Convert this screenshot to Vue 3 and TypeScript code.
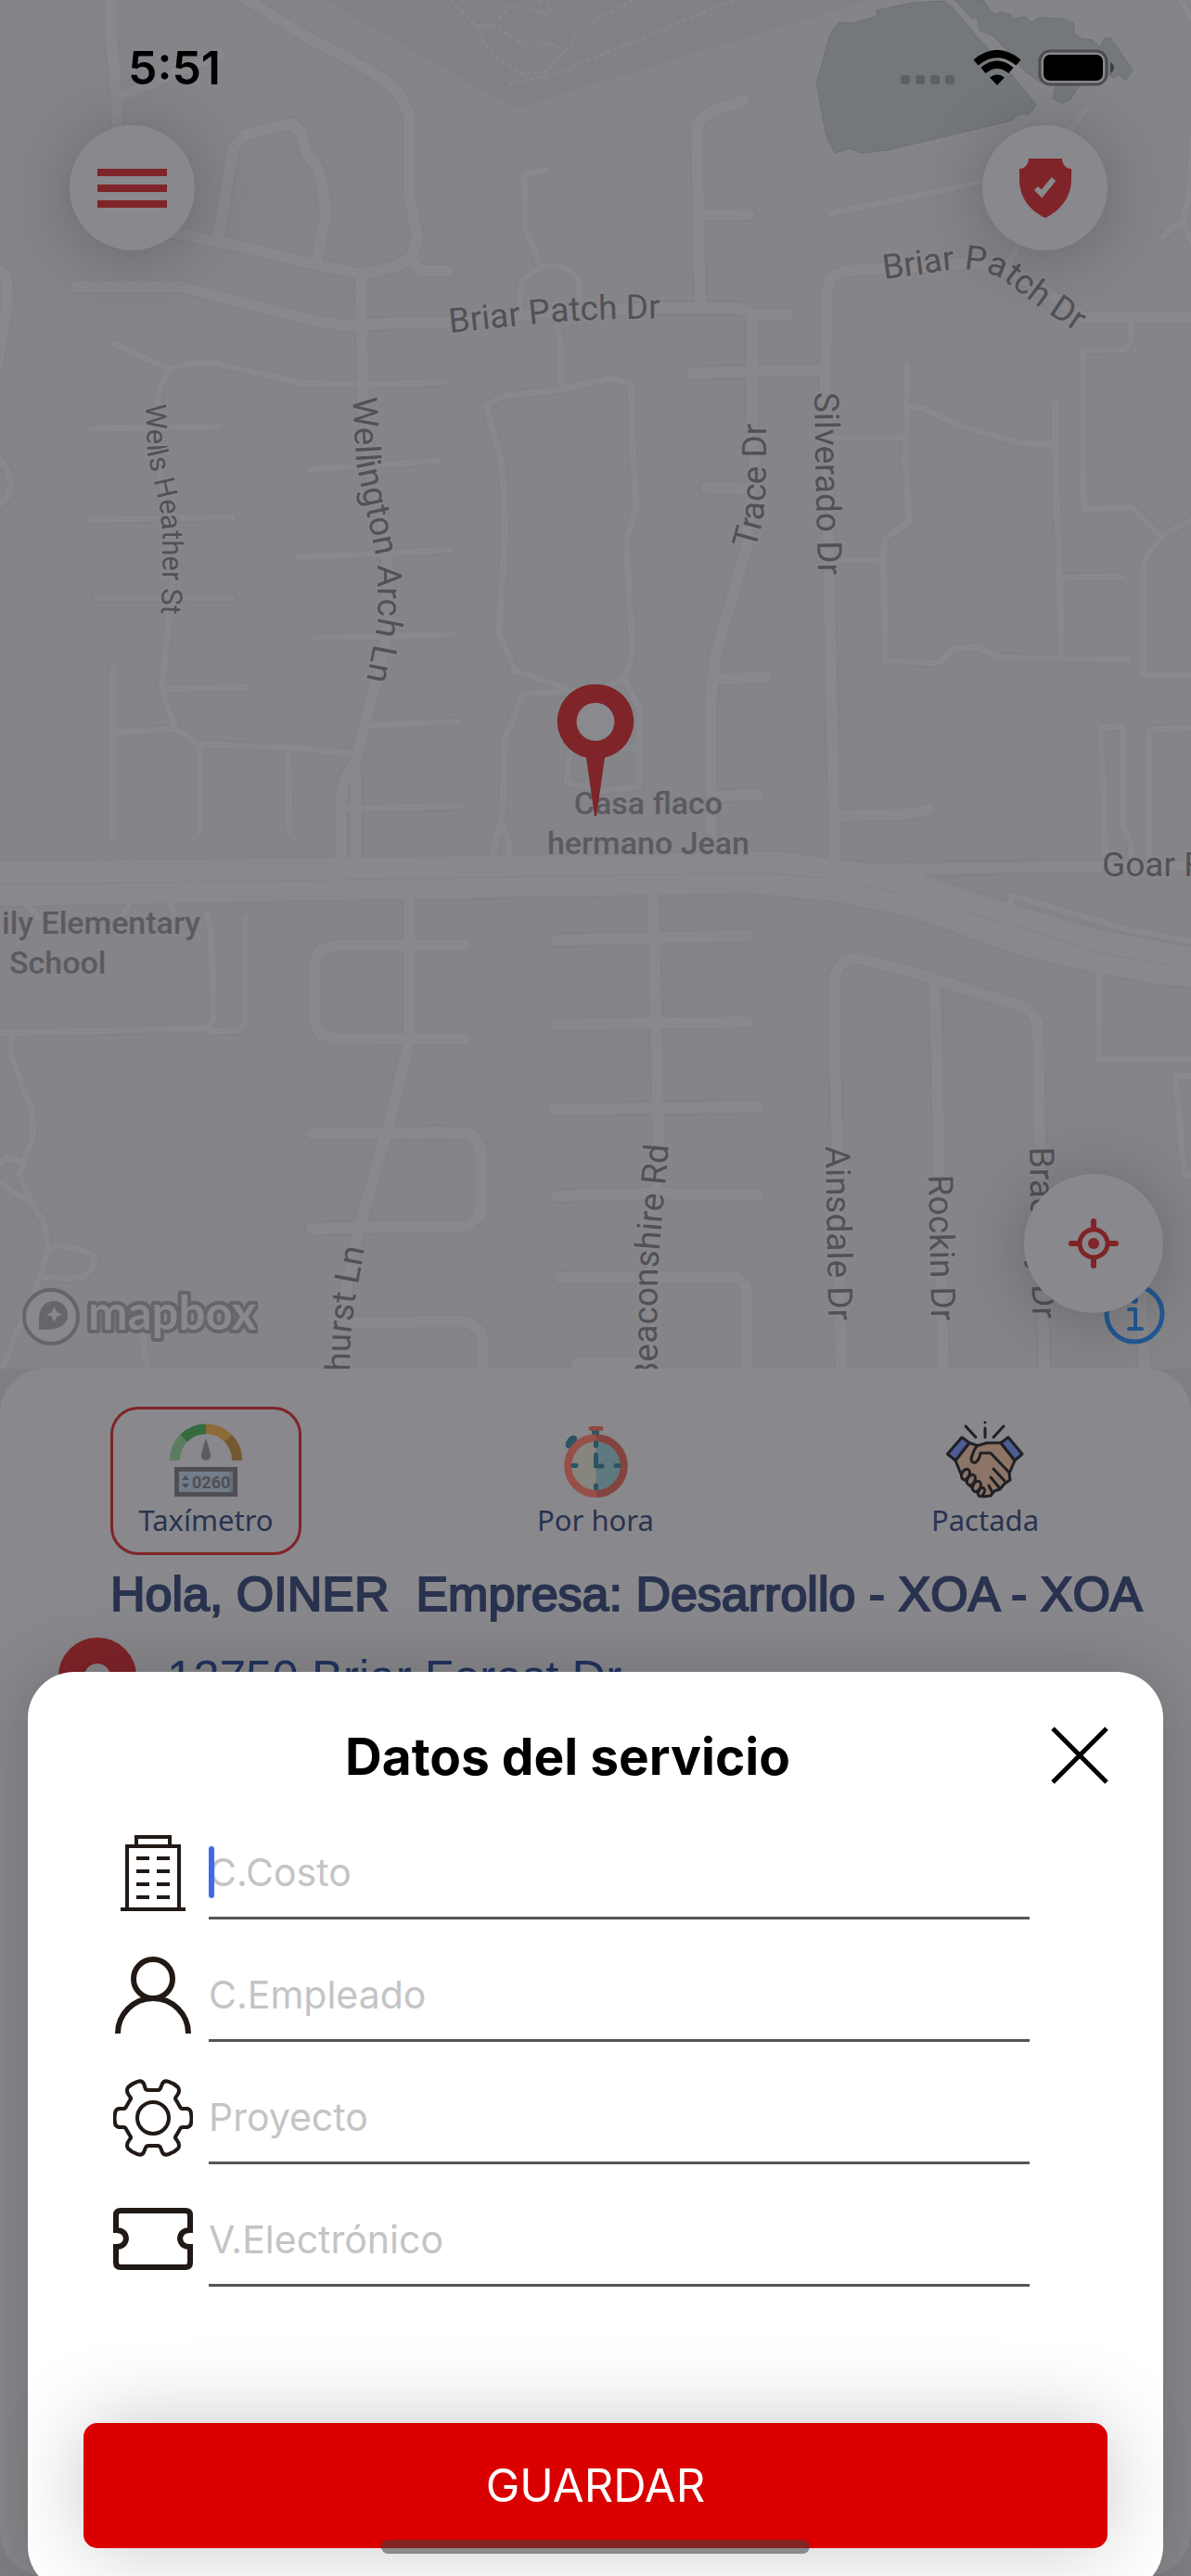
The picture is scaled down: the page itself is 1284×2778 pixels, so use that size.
<script setup lang="ts">
import { ref } from 'vue'

type FieldIcon = 'building' | 'person' | 'gear' | 'ticket'
interface Field { id: string; icon: FieldIcon; label: string }
interface StreetLabel { id: string; text: string; path: string; end?: boolean; small?: boolean }

const fields: Field[] = [
  { id: 'costo', icon: 'building', label: 'C.Costo' },
  { id: 'empleado', icon: 'person', label: 'C.Empleado' },
  { id: 'proyecto', icon: 'gear', label: 'Proyecto' },
  { id: 'vale', icon: 'ticket', label: 'V.Electrónico' },
]
const values = ref<Record<string, string>>({ costo: '', empleado: '', proyecto: '', vale: '' })
const active = ref('costo')

// Wide streets
const streets: string[] = [
  'M120 0V43L126 110L127 160', 'M131 104L236 58',
  'M262 -4L319 33L414 85L430 100L441 123V207L450 257L444 277L426 287L405 293L385 295L340 285L233 260L180 250',
  'M440 280L455 292H483', 'M235 257L251 160L264 145L315 133L325 143L330 165L342 180L348 200L351 233L341 283',
  'M82 309H195L344 347L373 351L389 350L483 347L600 336L710 332H797L808 337L811 346V470L813 500L804 593L771 707L766 760V833L767 925',
  'M810 339H849', 'M802 108L761 123L751 137L755 330', 'M758 232L808 231', 'M746 402L890 399',
  'M1284 342L1170 343L1125 313L1085 290L1040 284L947 290L912 292L896 299L891 313L890 417L894 617L896 733L900 930',
  'M-5 288L7 299L8 325L-3 392', 'M389 295L391 430L398 500L412 560L418 610V680L407 730L381 827',
  'M381 825L371 842L367 870L368 930', 'M381 825L384 842V930',
  'M761 526L809 527', 'M768 732L826 731', 'M768 859L818 857', 'M900 880L978 878L1002 873',
  'M441 970V1123L418 1217L385 1333L366 1430L362 1480',
  'M502 1019H364L346 1024L339 1040V1100L346 1116L364 1121L502 1120',
  'M336 1223L475 1221L508 1223L518 1237V1310L504 1322L336 1325', 'M375 1426L500 1425L516 1433L521 1447V1480',
  'M703 963L705 1000L710 1233L702 1370L698 1480', 'M600 1014L806 1009', 'M600 1105L806 1102',
  'M598 1196L818 1194', 'M600 1290L700 1287L818 1289', 'M604 1378L793 1377L804 1387L806 1480', 'M619 1480L622 1470H698',
  'M907 1480L902 1233L899 1053L908 1038L925 1033L1006 1055L1109 1088L1119 1103L1121 1240L1126 1480',
  'M1008 1058L1017 1480', 'M1230 1390L1234 1480',
]

// Narrow streets and alleys
const lanes: string[] = [
  'M121 370L184 398L201 392H233L324 413L393 415L479 412', 'M184 398L172 418L169 440L172 500L180 560L186 627L183 663L174 743L190 787L215 803L315 806L381 813',
  'M98 462L237 460', 'M334 506L473 497', 'M98 560L250 558', 'M104 645H250', 'M321 601L485 593', 'M339 688L489 684',
  'M397 782L495 778', 'M371 872L498 869', 'M176 743L265 741', 'M122 720V903', 'M122 790L190 786', 'M215 803V898', 'M311 807L312 898',
  'M-4 490L8 507L12 525L8 537L-4 548', 'M646 742L673 733L682 703L675 583L686 547L683 500L680 413L658 408L606 420L543 427L524 437L541 500L545 567L538 683L555 723L620 746L565 748L545 793L541 887L533 910L532 930', 'M541 887L549 910V930',
  'M615 805L611 843L645 853L689 848V763L673 733', 'M660 807H689', 'M588 184L565 188L567 248L583 288',
  'M559 338L563 302L583 288L598 286L612 290L624 302V330', 'M600 348L605 377V420',
  'M1096 267L1084 290', 'M896 230L1060 196', 'M1154 140L1170 118', 'M1270 -5L1286 22', 'M1286 150L1282 210L1275 238L1253 255', 'M1275 238L1286 264',
  'M1219 346V367L1213 377L1167 378V500L1169 549L1220 547L1252 578L1288 559', 'M1252 578L1236 600L1232 613V728H1288',
  'M978 393L976 500L980 563L955 580L952 600L955 713L1013 715L1027 700L1052 697L1076 709L1217 711',
  'M976 438L994 440L1031 458L1096 477L1138 480', 'M1137 433L1138 500L1145 710', 'M1141 623L1209 622', 'M896 472H976', 'M896 604H952',
  'M1192 930L1187 785L1211 783V890L1219 910L1220 930', 'M1239 930V787L1288 785', 'M1088 975L1092 966L1215 1002L1288 1016',
  'M-4 1114L223 1109L231 1099L227 1000L222 985', 'M223 1109L229 1112L258 1111L265 1103V988', 'M28 975L42 990', 'M141 972L132 988', 'M184 970L188 990',
  'M14 1114L10 1132L35 1200L36 1225L25 1253L21 1267L35 1297L48 1320L52 1347L39 1388L0 1480', 'M25 1253L8 1248L-4 1258', 'M-4 1273L35 1299',
  'M52 1347L66 1343L86 1347L102 1355L100 1368L88 1377L74 1379L43 1377', 'M152 1425L159 1480',
  'M1185 1050L1184 1142H1288', 'M1288 1160L1267 1161L1277 1267H1288',
]

const trails: string[] = [
  'M485 0L514 28L532 27L571 52L590 46L610 55L588 77L565 80L536 63L520 43L514 28', 'M532 27L549 7L576 10L588 16L593 10L590 2L567 0',
  'M548 91L604 78L642 62L791 0', 'M610 55L622 37L642 22L660 12L684 0',
]

const streetLabels: StreetLabel[] = [
  { id: 'briar-w', text: 'Briar Patch Dr', path: 'M485 359L590 348Q650 343 760 343' },
  { id: 'briar-e', text: 'Briar Patch Dr', path: 'M953 301L1000 295Q1050 284 1080 301L1120 331L1190 378' },
  { id: 'wells', text: 'Wells Heather St', path: 'M157 436L159 490L172 545L175 575V625L172 700', small: true },
  { id: 'wellington', text: 'Wellington Arch Ln', path: 'M380 429L384 500L404 594L407 620V672L390 760' },
  { id: 'trace', text: 'Trace Dr', path: 'M814 593L823 560L826 520V430' },
  { id: 'silverado', text: 'Silverado Dr', path: 'M878 423L879 500L883 660' },
  { id: 'churst', text: 'churst Ln', path: 'M375 1560L378 1440L383 1400L393 1346', end: true },
  { id: 'beacon', text: 'Beaconshire Rd', path: 'M712 1530L708 1440L709 1370L714 1310L721 1235', end: true },
  { id: 'ainsdale', text: 'Ainsdale Dr', path: 'M890 1236L894 1470' },
  { id: 'rockin', text: 'Rockin Dr', path: 'M1001 1267L1005 1470' },
  { id: 'brackley', text: 'Brackley Dr', path: 'M1110 1237L1114 1470' },
]
</script>

<template>
  <div class="screen">
    <section class="map" aria-label="Mapa">
      <svg class="map-canvas" viewBox="0 0 1284 1476" preserveAspectRatio="xMidYMid slice">
        <rect width="1284" height="1476" fill="#858488" />
        <path d="M350 0L555 117L642 90L937 0Z" fill="#808285" />
        <path v-for="t in trails" :key="t" :d="t" class="trail" />
        <path class="lake" d="M904 24L918 25L945 18V11L984 3L1017 1L1027 8L1051 37L1088 77L1117 113L1110 123H1099L1090 130L957 162L928 165L916 160L900 165L891 147L880 90L895 37Z" />
        <path class="lake" d="M1029 0L1047 19L1054 20L1056 33L1070 38L1084 53L1105 77L1121 88L1138 92L1135 107L1146 111L1154 107L1166 88L1195 80L1201 84L1205 80L1214 87L1221 75L1197 41H1191L1186 51L1178 43L1167 42L1159 37L1157 25L1148 20L1119 19L1112 24L1105 18L1094 20L1088 15L1078 13L1074 16L1068 12L1060 0Z" />
        <path v-for="d in lanes" :key="'c' + d" :d="d" class="line lane-casing" />
        <path v-for="d in streets" :key="'c' + d" :d="d" class="line street-casing" />
        <path class="highway" d="M-4 928L642 921L806 918H847L892 925L937 930L1288 927V939L998 944L1084 972L1185 1002L1288 1021V1065L1252 1063L1187 1051L1101 1032L1012 1000L974 988L900 973L806 964L642 967L-4 978Z" />
        <path v-for="d in lanes" :key="d" :d="d" class="line lane" />
        <path v-for="d in streets" :key="d" :d="d" class="line street" />
        <path d="M0 954L364 949L642 944L830 942L890 947" class="median" />
        <path d="M920 953L966 962M1020 978L1100 1000L1185 1027L1260 1041" class="median" />

        <g class="street-label">
          <template v-for="l in streetLabels" :key="l.id">
            <path :id="l.id" :d="l.path" fill="none" stroke="none" />
            <text :class="{ small: l.small }" :text-anchor="l.end ? 'end' : 'start'">
              <textPath :href="'#' + l.id" :startOffset="l.end ? '100%' : '0'">{{ l.text }}</textPath>
            </text>
          </template>
          <text x="1188" y="945">Goar Rd</text>
        </g>
        <g class="place-label">
          <text x="699" y="878" text-anchor="middle">Casa flaco</text>
          <text x="699" y="921" text-anchor="middle">hermano Jean</text>
          <text x="2" y="1007">ily Elementary</text>
          <text x="10" y="1050">School</text>
        </g>

        <path d="M642 738a40 40 0 0 1 10 79L643 880H641L632 817a40 40 0 0 1 10-79Zm0 20a20 20 0 1 0 0 41a20 20 0 1 0 0-41Z" fill="#7f2428" fill-rule="evenodd" />
        <circle cx="642" cy="778" r="20" fill="#8a898d" />
      </svg>

      <a class="mapbox" href="#mapbox" aria-label="mapbox">
        <svg width="256" height="76" viewBox="22 1382 256 76">
          <circle cx="55" cy="1420" r="29" fill="#89888c" stroke="#66656a" stroke-width="4" />
          <path d="M42 1434V1422C42 1410 49 1403 58 1403C67 1403 73 1410 73 1418C73 1429 63 1435 42 1434Z" fill="#66656a" />
          <path d="M58.500 1409L61 1415L67 1417.500L61 1420L58.500 1426L56 1420L50 1417.500L56 1415Z" fill="#89888c" />
          <text x="95" y="1434" class="mapbox-word">mapbox</text>
        </svg>
      </a>

      <a class="info" href="#info" aria-label="Información del mapa">
        <svg width="66" height="66" viewBox="0 0 66 66" fill="none" stroke="#225894" stroke-linecap="round" stroke-linejoin="round">
          <circle cx="33" cy="33" r="30" stroke-width="5" />
          <path d="M27 28H34V49M27 49H41" stroke-width="4" />
          <circle cx="33" cy="18" r="2" stroke-width="4" />
        </svg>
      </a>

      <button class="round menu" type="button" aria-label="Menú">
        <span class="bar"></span><span class="bar"></span><span class="bar"></span>
      </button>
      <button class="round shield" type="button" aria-label="Seguridad">
        <svg width="58" height="64" viewBox="0 0 58 64">
          <path d="M11 0H47C47 6 51 11 57 11V22C57 42 45 56 29 64C12 56 1 42 1 22V11C7 11 11 6 11 0Z" fill="#7f2428" />
          <path d="M19 32L25 38L38 22" fill="none" stroke="#8a898d" stroke-width="6" />
        </svg>
      </button>
      <button class="round locate" type="button" aria-label="Mi ubicación">
        <svg width="54" height="54" viewBox="0 0 54 54" fill="none" stroke="#7f2428" stroke-linecap="round">
          <circle cx="27" cy="27" r="15" stroke-width="5" />
          <circle cx="27" cy="27" r="6" fill="#7f2428" stroke="none" />
          <path d="M27 3V10M27 44V51M3 27H10M44 27H51" stroke-width="6" />
        </svg>
      </button>
    </section>

    <section class="panel">
      <div class="options">
        <button class="option selected" type="button">
          <svg width="84" height="84" viewBox="180 1532 84 84" fill="none">
            <g stroke-width="11">
              <path d="M188.500 1575A34 34 0 0 1 198 1551" stroke="#5a7d62" />
              <path d="M198 1551A34 34 0 0 1 222 1541" stroke="#366b40" />
              <path d="M222 1541A34 34 0 0 1 246 1551" stroke="#8d6b36" />
              <path d="M246 1551A34 34 0 0 1 255.500 1575" stroke="#735832" />
            </g>
            <path d="M222 1551Q228 1569 227 1572Q225 1575 222 1575Q219 1575 217 1572Q216 1569 222 1551Z" fill="#5d5c61" />
            <rect x="188" y="1582" width="68" height="32" fill="#4f4e54" />
            <rect x="193" y="1587" width="54" height="22" fill="#727d89" />
            <rect x="247" y="1587" width="4" height="22" fill="#666e78" />
            <path d="M200 1591L204 1596H196ZM200 1605L204 1600H196Z" fill="#4f4e54" />
            <text x="207" y="1605" class="digits">0260</text>
          </svg>
          <span>Taxímetro</span>
        </button>
        <button class="option" type="button">
          <svg width="84" height="84" viewBox="600 1534 84 84" fill="none">
            <ellipse cx="616" cy="1557" rx="5" ry="8" transform="rotate(38 616 1557)" fill="#2b5362" />
            <path d="M642 1544V1552" stroke="#2b5362" stroke-width="8" />
            <path d="M637 1542.500H648" stroke="#8c4943" stroke-width="5" stroke-linecap="round" />
            <path d="M642.500 1556A27 27 0 0 0 642.500 1610Z" fill="#86857e" />
            <path d="M642.500 1556A27 27 0 0 1 642.500 1610Z" fill="#5f7981" />
            <path d="M642.500 1552.500A30 30 0 0 0 642.500 1613" stroke="#984f48" stroke-width="8" />
            <path d="M642.500 1552.500A30 30 0 0 1 642.500 1613" stroke="#83443f" stroke-width="8" />
            <path d="M642.500 1558V1561M642.500 1604V1607M618 1582.500H621M664 1582.500H667M642.500 1571V1583H649" stroke="#2b5362" stroke-width="5" stroke-linecap="round" stroke-linejoin="round" />
          </svg>
          <span>Por hora</span>
        </button>
        <button class="option" type="button">
          <svg width="84" height="84" viewBox="1018 1532 84 84" fill="none" stroke="#202025" stroke-width="3" stroke-linecap="round" stroke-linejoin="round">
            <path d="M1039 1538L1050 1550M1060 1540V1550M1060 1534V1534M1080 1538L1069 1550" />
            <path d="M1043 1556L1052 1559L1062 1556H1077L1092 1575L1086 1589L1087 1596L1081 1600L1076 1606L1070 1608L1066 1613L1058 1614L1048 1607L1035 1592L1028 1575Z" fill="#8c7566" />
            <path d="M1035 1550L1043 1556L1028 1575L1019.500 1568Z" fill="#4d5c92" />
            <path d="M1085 1550L1100 1568L1092 1575L1077 1556Z" fill="#4d5c92" />
            <path d="M1052 1559Q1048 1562 1045 1573Q1045 1578 1050 1577Q1054 1574 1055 1567H1066L1086 1588" fill="#8c7566" />
            <g fill="#8c7566">
              <ellipse cx="1039" cy="1590" rx="4" ry="6" transform="rotate(28 1039 1590)" />
              <ellipse cx="1045" cy="1596" rx="4" ry="6" transform="rotate(28 1045 1596)" />
              <ellipse cx="1051" cy="1603" rx="4" ry="6" transform="rotate(28 1051 1603)" />
              <ellipse cx="1056" cy="1609" rx="3" ry="5" transform="rotate(28 1056 1609)" />
            </g>
            <path d="M1069 1584L1081 1597M1066 1593L1075 1604M1064 1602L1068 1610" />
          </svg>
          <span>Pactada</span>
        </button>
      </div>
      <p class="greeting">Hola, OINER&nbsp; Empresa: Desarrollo - XOA - XOA</p>
      <div class="origin">
        <svg width="84" height="150" viewBox="0 0 84 150">
          <circle cx="42" cy="42" r="28" fill="none" stroke="#7f2428" stroke-width="28" />
          <path d="M34 82H50L42 150Z" fill="#7f2428" />
        </svg>
        <p>12750 Briar Forest Dr</p>
      </div>
    </section>

    <header class="status">
      <span class="clock">5:51</span>
      <div class="signals">
        <svg width="50" height="40" viewBox="0 0 50 40" fill="#5f6064">
          <rect x="0" y="28" width="10" height="10" rx="3" /><rect x="16" y="28" width="10" height="10" rx="3" />
          <rect x="32" y="28" width="10" height="10" rx="3" /><rect x="48" y="28" width="10" height="10" rx="3" />
        </svg>
        <svg width="52" height="38" viewBox="0 0 52 38">
          <path d="M26 38L18 29.500Q26 23.500 34 29.500Z" />
          <path d="M11 22Q26 9.500 41 22" fill="none" stroke="#000" stroke-width="8" />
          <path d="M3 13.500Q26 -5.500 49 13.500" fill="none" stroke="#000" stroke-width="8" />
        </svg>
        <svg width="84" height="40" viewBox="0 0 84 40">
          <rect x="2" y="2" width="72" height="36" rx="11" fill="#89888c" stroke="#4b4b50" stroke-width="3" />
          <rect x="6" y="6" width="64" height="28" rx="7" />
          <path d="M78 14Q82 16 82 20Q82 24 78 26Z" fill="#3f3f44" />
        </svg>
      </div>
    </header>

    <section class="sheet" role="dialog" aria-labelledby="sheet-title">
      <div class="sheet-head">
        <h1 id="sheet-title">Datos del servicio</h1>
        <button class="close" type="button" aria-label="Cerrar">
          <svg width="62" height="62" viewBox="0 0 62 62"><path d="M2 2L60 60M60 2L2 60" stroke="#000" stroke-width="5" /></svg>
        </button>
      </div>
      <form @submit.prevent>
        <div v-for="f in fields" :key="f.id" class="field">
          <label :for="f.id" :aria-label="f.label">
            <svg width="86" height="86" viewBox="0 0 86 86" fill="none" stroke="#211915">
              <g v-if="f.icon === 'building'" stroke-width="4">
                <path d="M15 82V14H71V82M25 14V4H61V14" />
                <path d="M8 82H78" />
                <path d="M25 27H39M47 27H61M25 41H39M47 41H61M25 55H39M47 55H61M25 69H39M47 69H61" />
              </g>
              <g v-else-if="f.icon === 'person'" stroke-width="6">
                <circle cx="43" cy="25" r="21" />
                <path d="M5 84A38 38 0 0 1 81 84" />
              </g>
              <g v-else-if="f.icon === 'gear'" stroke-width="4" stroke-linejoin="round">
                <circle cx="43" cy="43" r="17" />
                <path d="M35 12Q36 13 38 13H48Q50 13 51 11L53 6Q55 2 60 4Q66 6 70 10Q72 13 70 17L68 20Q66 22 68 24L72 31Q73 33 75 33L80 33Q84 34 84 39Q85 43 84 48Q84 52 80 53L75 53Q73 53 72 55L68 62Q66 64 68 66L70 69Q72 73 70 76Q66 80 60 82Q55 84 53 80L51 75Q50 73 48 73H38Q36 73 35 75L33 80Q31 84 26 82Q20 80 16 76Q14 73 16 69L18 66Q20 64 18 62L14 55Q13 53 11 53L6 53Q2 52 2 48Q1 43 2 39Q2 34 6 33L11 33Q13 33 14 31L18 24Q20 22 18 20L16 17Q14 13 16 10Q20 6 26 4Q31 2 33 6Z" />
              </g>
              <path v-else stroke-width="6" d="M8 11H78Q83 11 83 16V32Q73 32 72 41Q73 50 83 50V67Q83 72 78 72H8Q3 72 3 67V50Q13 50 14 41Q13 32 3 32V16Q3 11 8 11Z" />
            </svg>
          </label>
          <div class="entry">
            <input :id="f.id" v-model="values[f.id]" type="text" :placeholder="f.label" autocomplete="off" @focus="active = f.id" />
            <span v-if="active === f.id" class="cursor"></span>
          </div>
        </div>
        <button class="save" type="submit">GUARDAR</button>
      </form>
    </section>
    <div class="home-bar"></div>
  </div>
</template>

<style>
body { margin: 0; }
</style>

<style scoped>
* { box-sizing: border-box; }
button { font: inherit; color: inherit; border: 0; padding: 0; margin: 0; background: none; cursor: pointer; }
p, h1 { margin: 0; }
svg { display: block; }
.screen {
  position: relative; display: grid; grid-template-rows: minmax(0, 1476fr) minmax(0, 1302fr); height: 100vh; overflow: hidden;
  background: #7f7e82; font-family: Inter, "Liberation Sans", sans-serif;
}
.map { position: relative; min-width: 0; overflow: hidden; }
.map-canvas { width: 100%; height: 100%; }
.line { fill: none; stroke-linecap: round; stroke-linejoin: round; }
.lane-casing { stroke: #808387; stroke-width: 10; }
.lane { stroke: #89888c; stroke-width: 7; }
.street-casing { stroke: #808387; stroke-width: 16; }
.street { stroke: #89888c; stroke-width: 12; }
.highway { fill: #89888c; stroke: #808387; stroke-width: 2; }
.median { fill: none; stroke: #808387; stroke-width: 1; }
.trail { fill: none; stroke: #88878b; stroke-width: 3; stroke-dasharray: 5 3; }
.lake { fill: #74787c; stroke: #6c7175; stroke-width: 1; }
.street-label, .place-label { font-family: Roboto, "Liberation Sans", sans-serif; paint-order: stroke; stroke: #88878b; stroke-width: 4px; }
.street-label { fill: #525156; font-size: 37px; }
.street-label .small { font-size: 31px; }
.place-label { fill: #5b5a60; font-size: 34px; font-weight: 500; stroke: #858488; }
.mapbox { position: absolute; left: 22px; bottom: 18px; }
.mapbox-word { font-family: Lato, sans-serif; font-weight: 700; font-size: 51px; fill: #89888c; stroke: #66656a; stroke-width: 8px; stroke-linejoin: round; paint-order: stroke; }
.info { position: absolute; right: 28px; bottom: 26px; }
.round {
  position: absolute; display: flex; flex-direction: column; align-items: center; justify-content: center;
  width: 135px; height: 135px; border-radius: 50%; background: #89888c; box-shadow: 0 6px 70px rgba(0, 0, 0, 0.24);
}
.menu { left: 75px; top: 135px; gap: 9px; }
.bar { width: 75px; height: 8px; background: #7f2428; }
.shield { right: 90px; top: 135px; }
.locate { right: 30px; bottom: 60px; width: 150px; height: 150px; }

.panel { min-width: 0; padding-top: 41px; border-radius: 48px; background: #89888c; color: #29334f; overflow: hidden; }
.options { display: flex; justify-content: space-between; padding: 0 119px; }
.option {
  display: flex; flex-direction: column; align-items: center; gap: 3px; width: 206px; height: 160px; padding-top: 12px;
  border: 3px solid transparent; border-radius: 30px; font-family: "Noto Sans", sans-serif; font-size: 31px; line-height: 40px;
}
.selected { border-color: #7f2428; }
.digits { font-family: Roboto, sans-serif; font-weight: 700; font-size: 18px; fill: #4f4e54; }
.greeting {
  margin: 12px 0 0 119px; font-family: "Liberation Sans", sans-serif; font-size: 52px; line-height: 60px;
  white-space: nowrap; -webkit-text-stroke: 2px #29334f;
}
.origin { display: flex; gap: 33px; padding: 17px 63px 0; }
.origin p { padding-top: 14px; font-family: "Liberation Sans", sans-serif; font-size: 51px; line-height: 60px; color: #22345f; }

.status { position: absolute; inset: 0 0 auto; display: flex; justify-content: space-between; align-items: center; padding: 43px 81px 0 138px; }
.clock { font-size: 50px; line-height: 60px; font-weight: 600; }
.signals { display: flex; align-items: center; gap: 18px; }
.signals svg { overflow: visible; }
.signals svg:first-child { margin-right: 10px; }

.sheet {
  position: absolute; left: 30px; right: 30px; bottom: -18px; padding: 47px 60px 48px; border-radius: 50px;
  background: #fff; box-shadow: 0 0 80px rgba(0, 0, 0, 0.2);
}
.sheet-head { position: relative; display: flex; justify-content: center; align-items: center; height: 88px; padding-right: 60px; }
.sheet-head h1 { font-size: 55px; line-height: 64px; font-weight: 700; color: #000; }
.close { position: absolute; right: -1px; top: 12px; }
.field { display: flex; align-items: center; gap: 17px; height: 132px; padding: 32px 84px 0 32px; }
.entry { position: relative; flex: 1; height: 100%; }
.entry input {
  width: 100%; height: 100%; padding: 0; border: 0; border-bottom: 3px solid #565656; border-radius: 0; outline: none;
  background: transparent; font: 400 41px/50px Inter, sans-serif; color: #000; caret-color: transparent;
}
.entry input::placeholder { color: #c4c4c6; opacity: 1; }
.cursor { position: absolute; left: 0; top: 21px; width: 6px; height: 56px; border-radius: 3px; background: #4169f0; }
.save {
  display: block; width: 100%; height: 135px; margin-top: 147px; border-radius: 15px; background: #da0000; color: #fff;
  font-size: 49px; line-height: 60px; box-shadow: 0 0 90px rgba(0, 0, 0, 0.22);
}
.home-bar { position: absolute; left: 50%; bottom: 24px; width: 36%; height: 15px; transform: translateX(-50%); border-radius: 8px; background: rgba(60, 66, 66, 0.55); }
</style>
